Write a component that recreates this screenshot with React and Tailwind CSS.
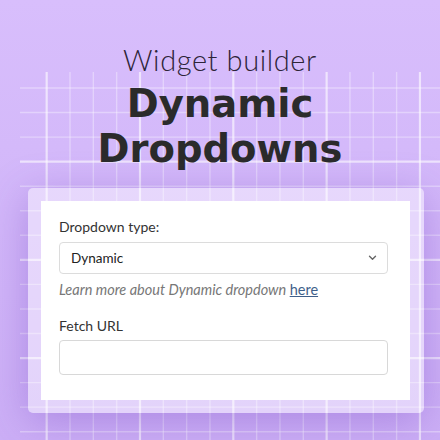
import React from "react";

function Grid() {
  const vs = Array.from({ length: 17 }, (_, i) => 46.67 + i * 23.33);
  const hs = Array.from({ length: 15 }, (_, j) => 88 + j * 24.55);
  return (
    <svg className="absolute inset-0" width="440" height="440" viewBox="0 0 440 440">
      {vs.map((x, i) => (
        <line
          key={"v" + i}
          x1={x}
          x2={x}
          y1={72}
          y2={440}
          stroke="#ffffff"
          strokeOpacity={i % 4 === 0 ? 0.6 : 0.35}
          strokeWidth={i % 4 === 0 ? 2.2 : 1.4}
        />
      ))}
      {hs.map((y, j) => (
        <line
          key={"h" + j}
          x1={20}
          x2={440}
          y1={y}
          y2={y}
          stroke="#ffffff"
          strokeOpacity={j % 4 === 3 ? 0.6 : 0.35}
          strokeWidth={j % 4 === 3 ? 2.2 : 1.4}
        />
      ))}
    </svg>
  );
}

export default function App() {
  return (
    <div className="relative w-[440px] h-[440px] overflow-hidden bg-gradient-to-b from-[#d8befc] to-[#ccaff6]">
      <Grid />
      <div className="relative flex flex-col items-center pt-[43px]">
        <div
          className="text-[29px] leading-[34px] font-light tracking-[0.6px] text-[#2d2438]"
          style={{ fontFamily: "Lato, 'Noto Sans', sans-serif" }}
        >
          Widget builder
        </div>
        <div
          className="mt-[3.5px] text-[38.5px] leading-[45px] font-bold text-[#2b2b2b] text-center"
          style={{ fontFamily: "'DejaVu Sans', sans-serif" }}
        >
          <div>Dynamic</div>
          <div>Dropdowns</div>
        </div>
      </div>
      <div className="relative ml-[28px] mt-[17.5px] w-[396px] p-[13px] rounded-[5px] bg-white/45 shadow-[0_8px_40px_rgba(110,60,190,0.35)]">
        <div
          className="w-[369px] bg-white pl-[18px] pr-[22px] pt-[16px] pb-[25px]"
          style={{ fontFamily: "Lato, 'Noto Sans', sans-serif" }}
        >
          <div className="text-[14px] leading-[20px] text-[#333333]">Dropdown type:</div>
          <div className="mt-[5px] h-[32px] border border-[#dcdcdc] rounded-[4px] flex items-center justify-between pl-[11px] pr-[10px]">
            <span className="text-[13.5px] text-[#222222]">Dynamic</span>
            <svg width="9" height="6" viewBox="0 0 9 6">
              <path d="M1.5 1.3 L4.5 4.3 L7.5 1.3" fill="none" stroke="#666666" strokeWidth="1.4" strokeLinecap="round" strokeLinejoin="round" />
            </svg>
          </div>
          <div className="mt-[6px] text-[14.5px] leading-[20px] italic text-[#777777]">
            Learn more about Dynamic dropdown{" "}
            <span className="not-italic underline text-[#3f5f8a]">here</span>
          </div>
          <div className="mt-[16px] text-[14px] leading-[20px] text-[#333333]">Fetch URL</div>
          <div className="mt-[4px] h-[35px] border border-[#d8d8d8] rounded-[4px]" />
        </div>
      </div>
    </div>
  );
}
